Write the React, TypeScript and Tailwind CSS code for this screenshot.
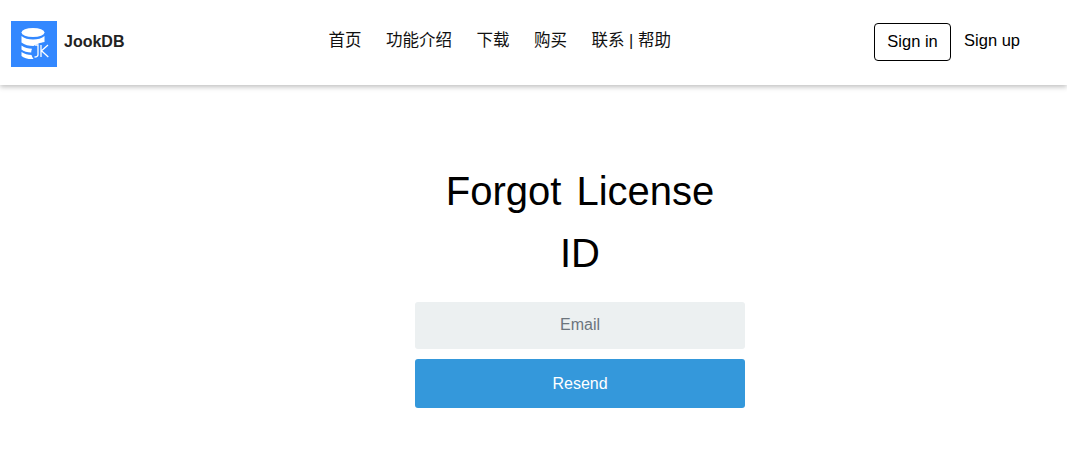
import React from 'react';

const navItems = ['首页', '功能介绍', '下载', '购买', '联系 | 帮助'];

const Logo: React.FC = () => (
    <svg width="46" height="46" viewBox="0 0 46 46" className="block">
        <rect width="46" height="46" fill="#3388ff" />
        <ellipse cx="22" cy="11.500" rx="11.500" ry="4.500" fill="#fff" />
        <path d="M10.500 15c2.500 2.500 7 3.500 11.500 3.500s9-1 11.500-3.500v6c-4 .5-9 2.500-11 4-4.500 0-9-1-12-3.500z" fill="#fff" />
        <path d="M10.500 24.500c3 2.300 7 3.200 10.500 3.200-.6 1.300-.8 2.500-.8 3.800-3.700-.2-7.700-1-9.700-3z" fill="#fff" />
        <path d="M10.500 31c2.800 2 6.500 2.800 10 3 .4 1.500 1 2.800 2 4-.5.100-1 .1-1.500.1-4.500 0-8.500-1.100-10.500-3.100z" fill="#fff" />
        <path d="M24 24h3v9.500c0 2-.8 2.500-3.500 2.500" fill="none" stroke="#fff" strokeWidth="1.300" />
        <path d="M30 24v12M37 24l-6.500 5.800 6.800 6.200" fill="none" stroke="#fff" strokeWidth="1.300" />
    </svg>
);

export default function App() {
    return (
        <div className="min-h-[471px] bg-white font-['Liberation_Sans','Noto_Sans_CJK_SC',sans-serif] text-black">
            <header className="flex h-[85px] items-center shadow-[0_2px_5px_rgba(0,0,0,0.25)]">
                <div className="flex w-[318px] items-center gap-[7px] pt-[3px] pl-[11px]">
                    <Logo />
                    <span className="mb-[5px] text-[16px] font-bold text-[#222]">JookDB</span>
                </div>
                <nav className="flex flex-1 items-center gap-[24.5px] pb-[4px] pl-[10.500px] text-[16.5px] text-[#111]">
                    {navItems.map((item) => (
                        <a key={item}>{item}</a>
                    ))}
                </nav>
                <div className="flex items-center pr-[47px] text-[16.500px]">
                    <button className="mb-[2px] h-[38px] w-[77px] rounded-[4px] border border-black">Sign in</button>
                    <a className="mb-[5px] ml-[13px]">Sign up</a>
                </div>
            </header>
            <main className="flex flex-col items-center pt-[75px] pl-[93px]">
                <div className="w-[330px]">
                    <h1 className="mx-auto w-[290px] text-center text-[40px] leading-[62px] font-normal [word-spacing:4px]">
                        Forgot License ID
                    </h1>
                    <input
                        placeholder="Email"
                        className="mt-[18px] block h-[47px] w-full rounded-[3px] bg-[#ecf0f1] pb-[2px] text-center text-[16px] outline-none placeholder:text-[#6c757d]"
                    />
                    <button className="mt-[10px] block h-[49px] w-full rounded-[3px] bg-[#3498db] text-[16px] text-white">
                        Resend
                    </button>
                </div>
            </main>
        </div>
    );
}
